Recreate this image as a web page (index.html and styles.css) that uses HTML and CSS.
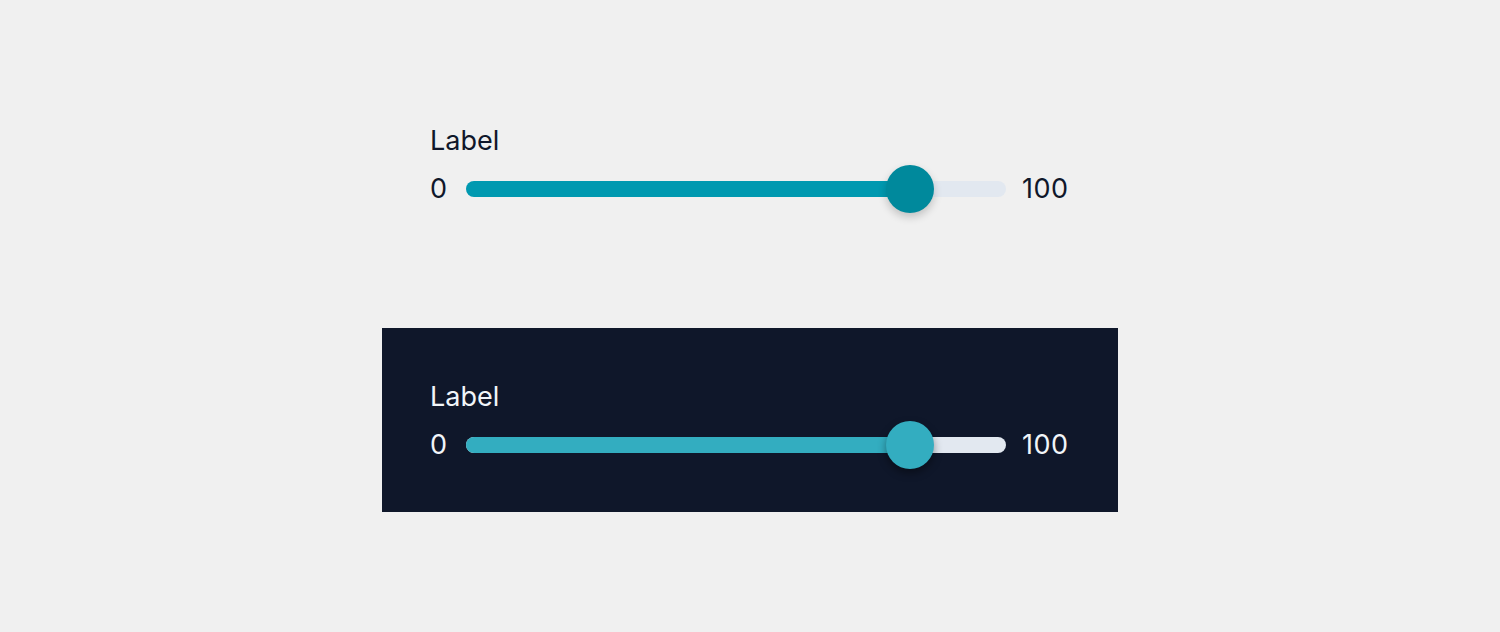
FILE: index.html
```html
<!DOCTYPE html>
<html lang="en">
<head>
    <meta charset="UTF-8">
    <meta name="viewport" content="width=device-width, initial-scale=1.0">
    <title>Slider</title>
    <link rel="stylesheet" href="styles.css">
</head>
<body>
    <div class="page">
        <!-- Light theme -->
        <div class="panel light">
            <div class="label">Label</div>
            <div class="slider-row">
                <span class="bound min">0</span>
                <div class="track">
                    <div class="fill" style="width: 82.2%"></div>
                    <div class="thumb" style="left: 82.2%"></div>
                </div>
                <span class="bound max">100</span>
            </div>
        </div>

        <!-- Dark theme -->
        <div class="panel dark">
            <div class="label">Label</div>
            <div class="slider-row">
                <span class="bound min">0</span>
                <div class="track">
                    <div class="fill" style="width: 82.2%"></div>
                    <div class="thumb" style="left: 82.2%"></div>
                </div>
                <span class="bound max">100</span>
            </div>
        </div>
    </div>
</body>
</html>
```

FILE: styles.css
```css
body {
    font-family: Inter, "Noto Sans", sans-serif;
    background-color: #f0f0f0;
    margin: 0;
    padding: 0;
}

.page {
    width: 736px;
    margin: 0 auto;
    padding-top: 72px;
    display: flex;
    flex-direction: column;
    gap: 72px;
}

.panel {
    height: 184px;
    box-sizing: border-box;
    padding: 51px 48px 0;
}

.label {
    font-size: 27px;
    line-height: 36px;
    margin-bottom: 6px;
}

.slider-row {
    display: flex;
    align-items: center;
    gap: 16px;
    height: 48px;
}

.bound {
    font-size: 27px;
    line-height: 36px;
}

.bound.min {
    width: 20px;
}

.bound.max {
    width: 48px;
    letter-spacing: 0.5px;
}

.track {
    position: relative;
    flex: 1;
    height: 16px;
    border-radius: 8px;
    background-color: #e2e8f0;
}

.fill {
    height: 100%;
    border-radius: 8px;
}

.thumb {
    position: absolute;
    top: 50%;
    width: 48px;
    height: 48px;
    border-radius: 50%;
    transform: translate(-50%, -50%);
    box-shadow: 0 4px 8px rgba(0, 0, 0, 0.2);
}

/* Light theme */
.light {
    color: #0f172a;
}

.light .fill {
    background-color: #0099b0;
}

.light .thumb {
    background-color: #00899c;
}

/* Dark theme */
.dark {
    background-color: #0f172a;
    color: #f1f5f9;
}

.dark .fill {
    background-color: #33adc0;
}

.dark .thumb {
    background-color: #33adc0;
    box-shadow: 0 4px 8px rgba(0, 0, 0, 0.4);
}
```
